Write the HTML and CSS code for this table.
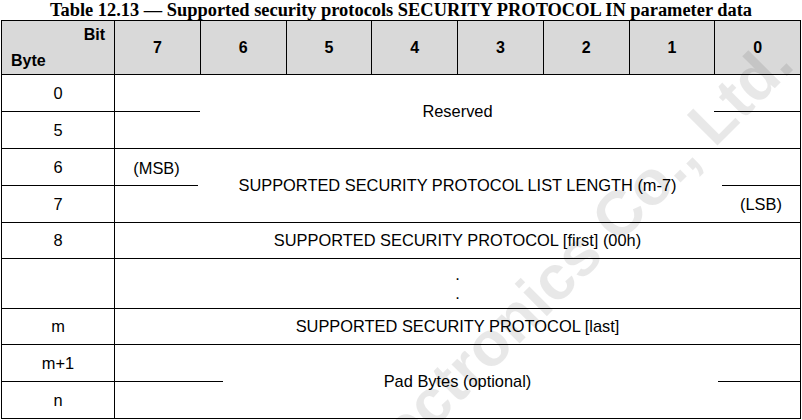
FILE: index.html
```html
<!DOCTYPE html>
<html>
<head>
<meta charset="utf-8">
<link rel="stylesheet" href="styles.css">
</head>
<body>
<div class="page">
  <div class="title">Table 12.13 — Supported security protocols SECURITY PROTOCOL IN parameter data</div>
  <div class="table">
    <div class="cell hd corner"><span class="bit">Bit</span><span class="byte">Byte</span></div>
    <div class="cell hd">7</div>
    <div class="cell hd">6</div>
    <div class="cell hd">5</div>
    <div class="cell hd">4</div>
    <div class="cell hd">3</div>
    <div class="cell hd">2</div>
    <div class="cell hd">1</div>
    <div class="cell hd">0</div>

    <div class="cell">0</div>
    <div class="cell block reserved">
      <div class="main">Reserved</div>
      <div class="seg l"></div>
      <div class="seg r"></div>
    </div>
    <div class="cell">5</div>

    <div class="cell">6</div>
    <div class="cell block length">
      <div class="main">SUPPORTED SECURITY PROTOCOL LIST LENGTH (m-7)</div>
      <div class="seg l">(MSB)</div>
      <div class="seg r"></div>
      <div class="lsb">(LSB)</div>
    </div>
    <div class="cell">7</div>

    <div class="cell">8</div>
    <div class="cell full">SUPPORTED SECURITY PROTOCOL [first] (00h)</div>

    <div class="cell"></div>
    <div class="cell full dots"><span>.</span><span>.</span></div>

    <div class="cell">m</div>
    <div class="cell full">SUPPORTED SECURITY PROTOCOL [last]</div>

    <div class="cell">m+1</div>
    <div class="cell block pad">
      <div class="main">Pad Bytes (optional)</div>
      <div class="seg l"></div>
      <div class="seg r"></div>
    </div>
    <div class="cell">n</div>
  </div>
  <div class="wm">Electronics Co., Ltd.</div>
</div>
</body>
</html>
```

FILE: styles.css
```css
* { box-sizing: border-box; }
html, body { margin: 0; padding: 0; background: #fff; }
.page {
  position: relative;
  width: 802px;
  height: 420px;
  overflow: hidden;
  color: #000;
}
.title {
  height: 20px;
  line-height: 20px;
  text-align: center;
  font-family: "Liberation Serif", serif;
  font-weight: bold;
  font-size: 18.4px;
  white-space: nowrap;
}
.table {
  margin-left: 1px;
  width: 800px;
  display: grid;
  grid-template-columns: 113px repeat(8, 1fr);
  grid-template-rows: 54px 37px 37px 37px 37px 36px 50px 36px 37px 37px;
  border-top: 1px solid #000;
  border-left: 1px solid #000;
  font-family: "Liberation Sans", Arial, sans-serif;
  font-size: 16.4px;
}
.cell {
  border-right: 1px solid #000;
  border-bottom: 1px solid #000;
  display: flex;
  align-items: center;
  justify-content: center;
  white-space: nowrap;
}
.hd {
  background: #d9d9d9;
  font-weight: bold;
  font-size: 16px;
}
.corner {
  flex-direction: column;
  align-items: stretch;
  justify-content: space-between;
  padding: 5px 9px 4px 9px;
  line-height: 18px;
}
.corner .bit { text-align: right; }
.corner .byte { text-align: left; }
.full { grid-column: span 8; }
.block {
  grid-column: span 8;
  grid-row: span 2;
  display: grid;
  align-items: stretch;
  justify-items: stretch;
  grid-template-rows: 37px 1fr;
}
.reserved { grid-template-columns: 85px 1fr 86px; }
.length { grid-template-columns: 83px 1fr 78px; }
.pad { grid-template-columns: 108px 1fr 82px; }
.block .main {
  grid-column: 1 / -1;
  grid-row: 1 / -1;
  display: flex;
  align-items: center;
  justify-content: center;
}
.block .seg {
  grid-row: 1;
  border-bottom: 1px solid #000;
  display: flex;
  align-items: center;
  justify-content: center;
  padding-top: 2px;
}
.block .seg.l { grid-column: 1; }
.block .seg.r { grid-column: 3; }
.block .lsb {
  grid-column: 3;
  grid-row: 2;
  display: flex;
  align-items: center;
  justify-content: center;
}
.dots {
  flex-direction: column;
  line-height: 19px;
}
.wm {
  position: absolute;
  left: 328px;
  top: 460px;
  transform: rotate(-45deg);
  transform-origin: 0 0;
  font-family: "Liberation Sans", Arial, sans-serif;
  font-weight: bold;
  font-size: 63px;
  line-height: 1;
  color: rgba(0, 0, 0, 0.09);
  white-space: nowrap;
  pointer-events: none;
}
```
